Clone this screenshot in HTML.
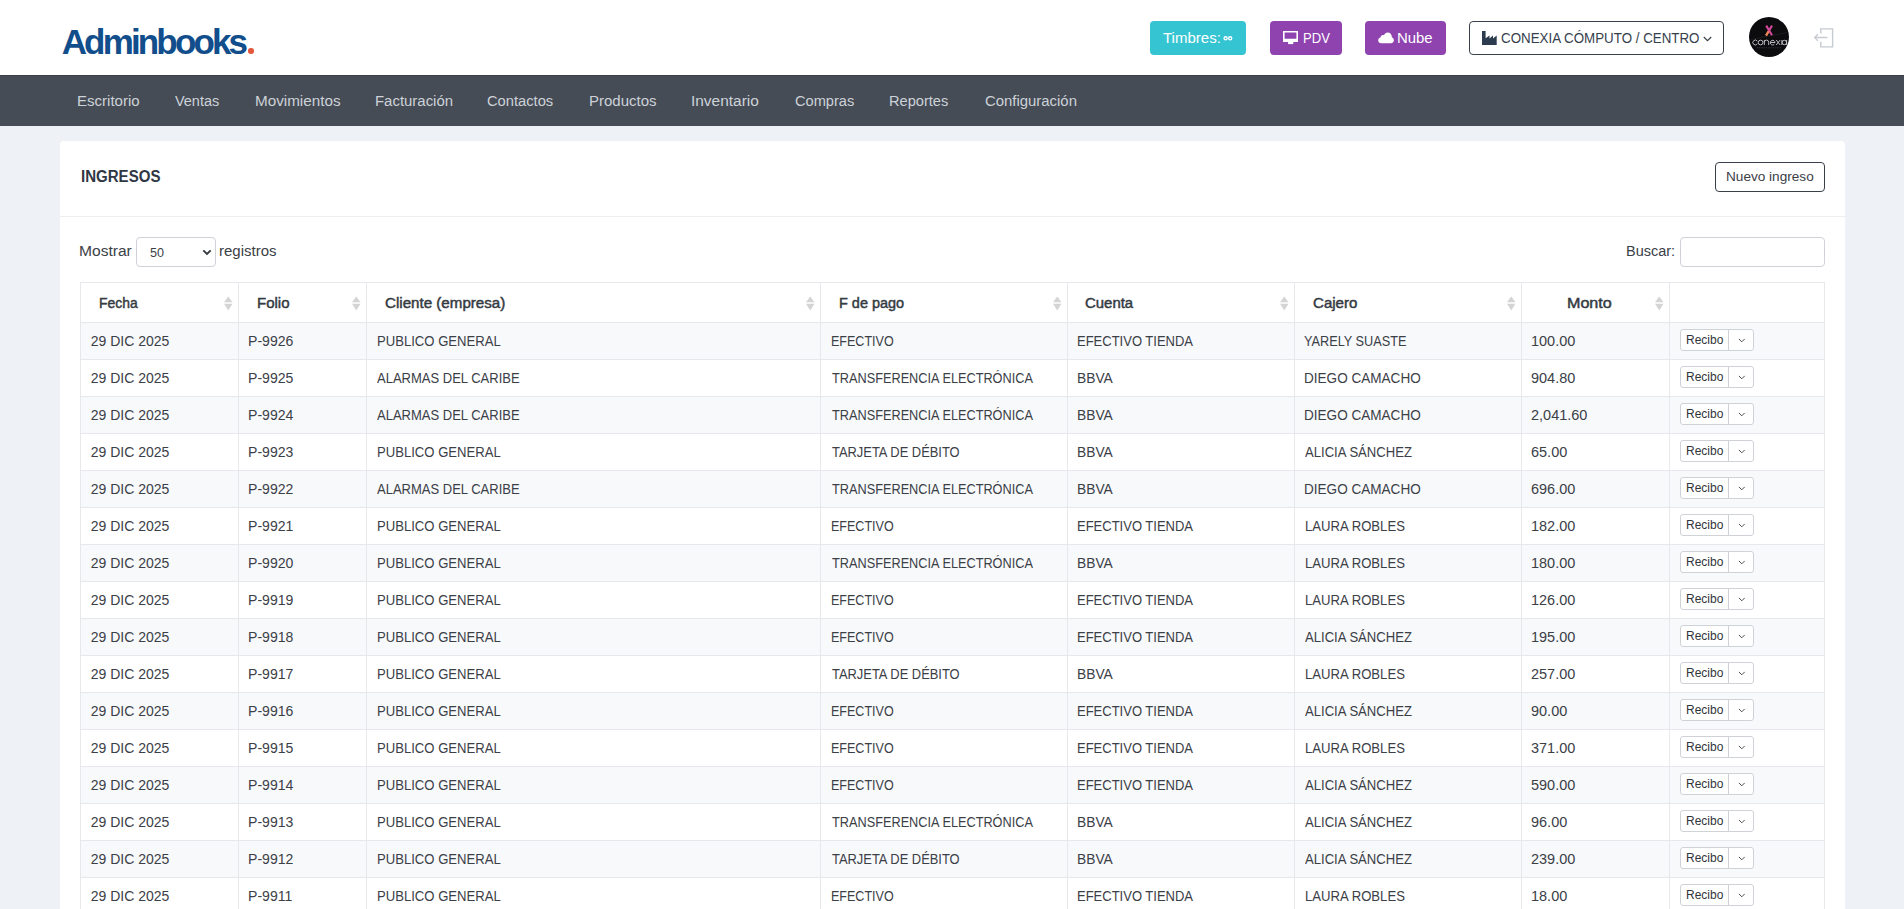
<!DOCTYPE html><html><head><meta charset="utf-8"><title>Ingresos</title><style>*{box-sizing:border-box;margin:0;padding:0}
html,body{width:1904px;height:909px;overflow:hidden}
body{background:#eef1f6;font-family:"Liberation Sans",sans-serif;color:#3b4047;position:relative}
body>*{position:absolute}
.t{white-space:nowrap;transform-origin:0 0}
#hdr{left:0;top:0;width:1904px;height:75px;background:#fff}
.logo{font-size:35px;line-height:39px;font-weight:bold;color:#124e8b}
#logodot{left:248px;top:48px;width:5.5px;height:5.5px;border-radius:50%;background:#e3583c}
.hb{top:21px;height:34px;border-radius:4px}
#b-timbres{left:1150px;width:96px;background:#35c4d2}
#b-pdv{left:1270px;width:72px;background:#8e43ae}
#b-nube{left:1365px;width:81px;background:#8e43ae}
.hbt{font-size:14px;line-height:18px;color:#fff}
#inf{left:1223.4px;top:35.9px}
#ic-pdv{left:1283px;top:30.9px}
#ic-nube{left:1378px;top:32px}
#b-emp{left:1469px;top:21px;width:255px;height:34px;border:1px solid #3a4049;border-radius:4px;background:#fff}
#ic-emp{left:1482px;top:31px}
.empt{font-size:14px;line-height:18px;color:#36404d}
#ic-chev{left:1702.5px;top:35.5px}
#avatar{left:1749px;top:17px}
#logout{left:1813px;top:27px}
#nav{left:0;top:75px;width:1904px;height:51px;background:#454c56;border-top:1px solid #3c414a}
.navt{font-size:14px;line-height:18px;color:#cdd2d8}
#card{left:60px;top:141px;width:1785px;height:900px;background:#fff;border-radius:4px}
#chline{left:60px;top:216px;width:1785px;height:1px;background:#eceef2}
.title{font-size:16px;line-height:20px;font-weight:bold;color:#2f3744}
#nuevo{left:1715px;top:162px;width:110px;height:30px;border:1px solid #3a4049;border-radius:4px}
.nuevot{font-size:13px;line-height:17px;color:#3b4047}
.ctlt{font-size:14px;line-height:18px;color:#3b4047}
#sel{left:136px;top:237px;width:80px;height:30px;border:1px solid #cfd3d8;border-radius:4px}
.selt{font-size:12px;line-height:16px;color:#3b4047}
#ic-sel{left:202px;top:249px}
#inp{left:1680px;top:237px;width:145px;height:30px;border:1px solid #cfd3d8;border-radius:4px}
#thead{left:80px;top:282px;width:1745px;height:41px;background:#fff;border-top:1px solid #e6e8eb;border-bottom:1px solid #e6e8eb}
.tr{left:80px;width:1745px;height:37px;background:#fff;border-bottom:1px solid #e6e8eb}
.tr.odd{background:#f8f9fb}
.vl{top:282px;width:1px;height:700px;background:#e6e8eb}
.tht{font-size:14px;line-height:18px;font-weight:normal;color:#343a42;-webkit-text-stroke:0.45px #343a42}
.srt{top:295.5px}
.tdt{font-size:14px;line-height:18px;color:#3b4047}
.bgp{left:1680px;width:74px;height:22px;border:1px solid #cfd3d8;border-radius:3px;background:#fff}
.bgp::after{content:"";position:absolute;left:47px;top:0;width:1px;height:20px;background:#cfd3d8}
.rbt{font-size:12px;line-height:16px;color:#30353b}
.ddc{left:1737.5px}
</style></head><body>
<div id="hdr"></div>
<span class="t logo" style="left:61.67px;top:22.00px;letter-spacing:-2.836px">Adminbooks</span>
<div id="logodot"></div>
<div class="hb" id="b-timbres"></div>
<span class="t hbt" style="left:1163.20px;top:29.00px;transform:scaleX(1.0719)">Timbres:</span>
<svg id="inf" width="10" height="5" viewBox="0 0 10 5"><circle cx="2.6" cy="2.3" r="1.55" stroke="#fff" stroke-width="1.35" fill="none"/><circle cx="7.2" cy="2.3" r="1.55" stroke="#fff" stroke-width="1.35" fill="none"/></svg>
<div class="hb" id="b-pdv"></div>
<svg id="ic-pdv" width="15" height="14" viewBox="0 0 15 14"><path fill="#fff" fill-rule="evenodd" d="M0 0h15v11.1H0zM1.6 1.4v6.4h11.8V1.4z"/><path fill="#fff" d="M5.1 11h5.2v2.1H5.1z"/></svg>
<span class="t hbt" style="left:1302.52px;top:29.00px;transform:scaleX(0.9332)">PDV</span>
<div class="hb" id="b-nube"></div>
<svg id="ic-nube" width="16" height="12" viewBox="0 0 16 12"><path fill="#fff" d="M3.3 11.2C1.5 11.2 0.2 10 0.2 8.4 0.2 6.9 1.2 5.8 2.6 5.6 2.6 5.5 2.6 5.4 2.6 5.3 2.6 4 3.6 3 4.9 3 5.3 3 5.7 3.1 6 3.3 6.7 1.6 8.2 0.6 9.8 0.6 12 0.6 13.8 2.4 13.8 4.6 13.8 4.8 13.8 5 13.8 5.2 15.1 5.7 15.9 6.9 15.9 8.3 15.9 9.9 14.6 11.2 13 11.2z"/></svg>
<span class="t hbt" style="left:1396.81px;top:29.00px;transform:scaleX(1.0656)">Nube</span>
<div id="b-emp"></div>
<svg id="ic-emp" width="15" height="14" viewBox="0 0 15 14"><path fill="#2d3b4e" d="M0 0h3.6v7.2L7.5 4.4v3L11 4.4v3l3.7-2.9V14H0z"/></svg>
<span class="t empt" style="left:1500.57px;top:28.70px;transform:scaleX(0.9533)">CONEXIA CÓMPUTO / CENTRO</span>
<svg id="ic-chev" width="9" height="6" viewBox="0 0 9 6"><path d="M0.8 1L4.5 4.6 8.2 1" stroke="#3a4049" stroke-width="1.2" fill="none"/></svg>
<svg id="avatar" width="40" height="40" viewBox="0 0 40 40"><circle cx="20" cy="20" r="20" fill="#0c0c0f"/>
<path d="M2 22.5L38 15.5" stroke="#2a2a2e" stroke-width="0.5"/>
<path d="M17.2 8.6L23 18.2M23 8.6L17.2 18.2" stroke="#d5489a" stroke-width="2.1"/>
<path d="M17 18.6L19.7 14.3" stroke="#e98a4a" stroke-width="2.1"/>
<g stroke="#c4c4c9" stroke-width="0.95" fill="none"><path d="M8.3 24.2A2.4 2.4 0 1 0 8.3 26.8"/><circle cx="11.6" cy="25.5" r="2.35"/><path d="M15.3 23v5M15.3 25.3a2.2 2.2 0 0 1 4.4 0V28"/><path d="M21.3 25.5h4.7A2.35 2.35 0 1 0 25.4 27.2"/><path d="M27.2 23l4 5M31.2 23l-4 5"/><path d="M32.9 23v5"/><circle cx="35.4" cy="25.5" r="2.2"/><path d="M37.6 23v5"/></g>
<path d="M7.5 30.8h25" stroke="#4a4a50" stroke-width="0.6" stroke-dasharray="1.5 0.8"/></svg>
<svg id="logout" width="22" height="22" viewBox="0 0 22 22"><path d="M7.8 6.6V1.9h11.8v18.0H7.8v-5.1" stroke="#c6cbd2" stroke-width="1.4" fill="none"/><path d="M14.3 10.5H1.6M5 7.2L1.6 10.5 5 13.9" stroke="#c6cbd2" stroke-width="1.3" fill="none"/></svg>
<div id="nav"></div>
<span class="t navt" style="left:77.06px;top:92.00px;transform:scaleX(1.0735)">Escritorio</span>
<span class="t navt" style="left:175.15px;top:92.00px;transform:scaleX(1.0320)">Ventas</span>
<span class="t navt" style="left:255.38px;top:92.00px;transform:scaleX(1.0884)">Movimientos</span>
<span class="t navt" style="left:375.31px;top:92.00px;transform:scaleX(1.0669)">Facturación</span>
<span class="t navt" style="left:487.48px;top:92.00px;transform:scaleX(1.0494)">Contactos</span>
<span class="t navt" style="left:588.86px;top:92.00px;transform:scaleX(1.0718)">Productos</span>
<span class="t navt" style="left:691.45px;top:92.00px;transform:scaleX(1.1026)">Inventario</span>
<span class="t navt" style="left:794.73px;top:92.00px;transform:scaleX(1.0444)">Compras</span>
<span class="t navt" style="left:889.00px;top:92.00px;transform:scaleX(1.0428)">Reportes</span>
<span class="t navt" style="left:984.54px;top:92.00px;transform:scaleX(1.0644)">Configuración</span>
<div id="card"></div><div id="chline"></div>
<span class="t title" style="left:80.71px;top:167.00px;transform:scaleX(0.9406)">INGRESOS</span>
<div id="nuevo"></div>
<span class="t nuevot" style="left:1726.30px;top:168.00px;transform:scaleX(1.0463)">Nuevo ingreso</span>
<span class="t ctlt" style="left:79.34px;top:242.20px;transform:scaleX(1.1122)">Mostrar</span>
<div id="sel"></div>
<span class="t selt" style="left:150.17px;top:244.50px;transform:scaleX(1.0494)">50</span>
<svg id="ic-sel" width="10" height="7" viewBox="0 0 10 7"><path d="M1.3 1.4L5 5 8.7 1.4" stroke="#343a40" stroke-width="1.9" fill="none"/></svg>
<span class="t ctlt" style="left:219.44px;top:242.20px;transform:scaleX(1.0702)">registros</span>
<span class="t ctlt" style="left:1625.55px;top:242.00px;transform:scaleX(1.0349)">Buscar:</span>
<div id="inp"></div>
<div id="thead"></div>
<div class="tr odd" style="top:323px"></div>
<div class="tr" style="top:360px"></div>
<div class="tr odd" style="top:397px"></div>
<div class="tr" style="top:434px"></div>
<div class="tr odd" style="top:471px"></div>
<div class="tr" style="top:508px"></div>
<div class="tr odd" style="top:545px"></div>
<div class="tr" style="top:582px"></div>
<div class="tr odd" style="top:619px"></div>
<div class="tr" style="top:656px"></div>
<div class="tr odd" style="top:693px"></div>
<div class="tr" style="top:730px"></div>
<div class="tr odd" style="top:767px"></div>
<div class="tr" style="top:804px"></div>
<div class="tr odd" style="top:841px"></div>
<div class="tr" style="top:878px"></div>
<div class="vl" style="left:80px"></div>
<div class="vl" style="left:238px"></div>
<div class="vl" style="left:366px"></div>
<div class="vl" style="left:820px"></div>
<div class="vl" style="left:1067px"></div>
<div class="vl" style="left:1294px"></div>
<div class="vl" style="left:1521px"></div>
<div class="vl" style="left:1669px"></div>
<div class="vl" style="left:1824px"></div>
<span class="t tht" style="left:98.81px;top:293.70px;transform:scaleX(0.9926)">Fecha</span>
<svg class="srt" style="left:224.0px" width="9" height="15" viewBox="0 0 9 15"><path d="M4.25 0.6L8.5 6.3H0z" fill="#d4d4d4"/><path d="M4.25 14.4L8.5 7.7H0z" fill="#d4d4d4"/></svg>
<span class="t tht" style="left:256.82px;top:293.70px;transform:scaleX(1.0716)">Folio</span>
<svg class="srt" style="left:352.0px" width="9" height="15" viewBox="0 0 9 15"><path d="M4.25 0.6L8.5 6.3H0z" fill="#d4d4d4"/><path d="M4.25 14.4L8.5 7.7H0z" fill="#d4d4d4"/></svg>
<span class="t tht" style="left:384.57px;top:293.70px;transform:scaleX(1.0811)">Cliente (empresa)</span>
<svg class="srt" style="left:806.0px" width="9" height="15" viewBox="0 0 9 15"><path d="M4.25 0.6L8.5 6.3H0z" fill="#d4d4d4"/><path d="M4.25 14.4L8.5 7.7H0z" fill="#d4d4d4"/></svg>
<span class="t tht" style="left:838.68px;top:293.70px;transform:scaleX(1.0330)">F de pago</span>
<svg class="srt" style="left:1053.0px" width="9" height="15" viewBox="0 0 9 15"><path d="M4.25 0.6L8.5 6.3H0z" fill="#d4d4d4"/><path d="M4.25 14.4L8.5 7.7H0z" fill="#d4d4d4"/></svg>
<span class="t tht" style="left:1085.24px;top:293.70px;transform:scaleX(1.0664)">Cuenta</span>
<svg class="srt" style="left:1280.0px" width="9" height="15" viewBox="0 0 9 15"><path d="M4.25 0.6L8.5 6.3H0z" fill="#d4d4d4"/><path d="M4.25 14.4L8.5 7.7H0z" fill="#d4d4d4"/></svg>
<span class="t tht" style="left:1312.63px;top:293.70px;transform:scaleX(1.0763)">Cajero</span>
<svg class="srt" style="left:1507.0px" width="9" height="15" viewBox="0 0 9 15"><path d="M4.25 0.6L8.5 6.3H0z" fill="#d4d4d4"/><path d="M4.25 14.4L8.5 7.7H0z" fill="#d4d4d4"/></svg>
<span class="t tht" style="left:1566.64px;top:293.70px;transform:scaleX(1.1503)">Monto</span>
<svg class="srt" style="left:1655.0px" width="9" height="15" viewBox="0 0 9 15"><path d="M4.25 0.6L8.5 6.3H0z" fill="#d4d4d4"/><path d="M4.25 14.4L8.5 7.7H0z" fill="#d4d4d4"/></svg>
<span class="t tdt" style="left:90.72px;top:332.00px">29 DIC 2025</span>
<span class="t tdt" style="left:248.49px;top:332.00px;transform:scaleX(1.0043)">P-9926</span>
<span class="t tdt" style="left:377.02px;top:332.00px;transform:scaleX(0.9354)">PUBLICO GENERAL</span>
<span class="t tdt" style="left:830.57px;top:332.00px;transform:scaleX(0.8947)">EFECTIVO</span>
<span class="t tdt" style="left:1077.27px;top:332.00px;transform:scaleX(0.9283)">EFECTIVO TIENDA</span>
<span class="t tdt" style="left:1304.29px;top:332.00px;transform:scaleX(0.9075)">YARELY SUASTE</span>
<span class="t tdt" style="left:1531.33px;top:332.00px;transform:scaleX(1.0343)">100.00</span>
<div class="bgp" style="top:329px"></div>
<span class="t rbt" style="left:1685.66px;top:331.80px;transform:scaleX(0.9986)">Recibo</span>
<svg class="ddc" style="top:338px" width="8" height="5" viewBox="0 0 8 5"><path d="M0.9 0.9L3.8 3.8 6.7 0.9" stroke="#4a4f55" stroke-width="1" fill="none"/></svg>
<span class="t tdt" style="left:90.72px;top:369.00px">29 DIC 2025</span>
<span class="t tdt" style="left:248.49px;top:369.00px;transform:scaleX(1.0043)">P-9925</span>
<span class="t tdt" style="left:377.20px;top:369.00px;transform:scaleX(0.9288)">ALARMAS DEL CARIBE</span>
<span class="t tdt" style="left:831.64px;top:369.00px;transform:scaleX(0.9096)">TRANSFERENCIA ELECTRÓNICA</span>
<span class="t tdt" style="left:1077.37px;top:369.00px;transform:scaleX(0.9847)">BBVA</span>
<span class="t tdt" style="left:1304.11px;top:369.00px;transform:scaleX(0.9680)">DIEGO CAMACHO</span>
<span class="t tdt" style="left:1531.33px;top:369.00px;transform:scaleX(1.0343)">904.80</span>
<div class="bgp" style="top:366px"></div>
<span class="t rbt" style="left:1685.66px;top:368.80px;transform:scaleX(0.9986)">Recibo</span>
<svg class="ddc" style="top:375px" width="8" height="5" viewBox="0 0 8 5"><path d="M0.9 0.9L3.8 3.8 6.7 0.9" stroke="#4a4f55" stroke-width="1" fill="none"/></svg>
<span class="t tdt" style="left:90.72px;top:406.00px">29 DIC 2025</span>
<span class="t tdt" style="left:248.49px;top:406.00px;transform:scaleX(1.0043)">P-9924</span>
<span class="t tdt" style="left:377.20px;top:406.00px;transform:scaleX(0.9288)">ALARMAS DEL CARIBE</span>
<span class="t tdt" style="left:831.64px;top:406.00px;transform:scaleX(0.9096)">TRANSFERENCIA ELECTRÓNICA</span>
<span class="t tdt" style="left:1077.37px;top:406.00px;transform:scaleX(0.9847)">BBVA</span>
<span class="t tdt" style="left:1304.11px;top:406.00px;transform:scaleX(0.9680)">DIEGO CAMACHO</span>
<span class="t tdt" style="left:1531.33px;top:406.00px;transform:scaleX(1.0343)">2,041.60</span>
<div class="bgp" style="top:403px"></div>
<span class="t rbt" style="left:1685.66px;top:405.80px;transform:scaleX(0.9986)">Recibo</span>
<svg class="ddc" style="top:412px" width="8" height="5" viewBox="0 0 8 5"><path d="M0.9 0.9L3.8 3.8 6.7 0.9" stroke="#4a4f55" stroke-width="1" fill="none"/></svg>
<span class="t tdt" style="left:90.72px;top:443.00px">29 DIC 2025</span>
<span class="t tdt" style="left:248.49px;top:443.00px;transform:scaleX(1.0043)">P-9923</span>
<span class="t tdt" style="left:377.02px;top:443.00px;transform:scaleX(0.9354)">PUBLICO GENERAL</span>
<span class="t tdt" style="left:831.51px;top:443.00px;transform:scaleX(0.9218)">TARJETA DE DÉBITO</span>
<span class="t tdt" style="left:1077.37px;top:443.00px;transform:scaleX(0.9847)">BBVA</span>
<span class="t tdt" style="left:1304.57px;top:443.00px;transform:scaleX(0.9350)">ALICIA SÁNCHEZ</span>
<span class="t tdt" style="left:1531.33px;top:443.00px;transform:scaleX(1.0343)">65.00</span>
<div class="bgp" style="top:440px"></div>
<span class="t rbt" style="left:1685.66px;top:442.80px;transform:scaleX(0.9986)">Recibo</span>
<svg class="ddc" style="top:449px" width="8" height="5" viewBox="0 0 8 5"><path d="M0.9 0.9L3.8 3.8 6.7 0.9" stroke="#4a4f55" stroke-width="1" fill="none"/></svg>
<span class="t tdt" style="left:90.72px;top:480.00px">29 DIC 2025</span>
<span class="t tdt" style="left:248.49px;top:480.00px;transform:scaleX(1.0043)">P-9922</span>
<span class="t tdt" style="left:377.20px;top:480.00px;transform:scaleX(0.9288)">ALARMAS DEL CARIBE</span>
<span class="t tdt" style="left:831.64px;top:480.00px;transform:scaleX(0.9096)">TRANSFERENCIA ELECTRÓNICA</span>
<span class="t tdt" style="left:1077.37px;top:480.00px;transform:scaleX(0.9847)">BBVA</span>
<span class="t tdt" style="left:1304.11px;top:480.00px;transform:scaleX(0.9680)">DIEGO CAMACHO</span>
<span class="t tdt" style="left:1531.33px;top:480.00px;transform:scaleX(1.0343)">696.00</span>
<div class="bgp" style="top:477px"></div>
<span class="t rbt" style="left:1685.66px;top:479.80px;transform:scaleX(0.9986)">Recibo</span>
<svg class="ddc" style="top:486px" width="8" height="5" viewBox="0 0 8 5"><path d="M0.9 0.9L3.8 3.8 6.7 0.9" stroke="#4a4f55" stroke-width="1" fill="none"/></svg>
<span class="t tdt" style="left:90.72px;top:517.00px">29 DIC 2025</span>
<span class="t tdt" style="left:248.49px;top:517.00px;transform:scaleX(1.0043)">P-9921</span>
<span class="t tdt" style="left:377.02px;top:517.00px;transform:scaleX(0.9354)">PUBLICO GENERAL</span>
<span class="t tdt" style="left:830.57px;top:517.00px;transform:scaleX(0.8947)">EFECTIVO</span>
<span class="t tdt" style="left:1077.27px;top:517.00px;transform:scaleX(0.9283)">EFECTIVO TIENDA</span>
<span class="t tdt" style="left:1304.59px;top:517.00px;transform:scaleX(0.9370)">LAURA ROBLES</span>
<span class="t tdt" style="left:1531.33px;top:517.00px;transform:scaleX(1.0343)">182.00</span>
<div class="bgp" style="top:514px"></div>
<span class="t rbt" style="left:1685.66px;top:516.80px;transform:scaleX(0.9986)">Recibo</span>
<svg class="ddc" style="top:523px" width="8" height="5" viewBox="0 0 8 5"><path d="M0.9 0.9L3.8 3.8 6.7 0.9" stroke="#4a4f55" stroke-width="1" fill="none"/></svg>
<span class="t tdt" style="left:90.72px;top:554.00px">29 DIC 2025</span>
<span class="t tdt" style="left:248.49px;top:554.00px;transform:scaleX(1.0043)">P-9920</span>
<span class="t tdt" style="left:377.02px;top:554.00px;transform:scaleX(0.9354)">PUBLICO GENERAL</span>
<span class="t tdt" style="left:831.64px;top:554.00px;transform:scaleX(0.9096)">TRANSFERENCIA ELECTRÓNICA</span>
<span class="t tdt" style="left:1077.37px;top:554.00px;transform:scaleX(0.9847)">BBVA</span>
<span class="t tdt" style="left:1304.59px;top:554.00px;transform:scaleX(0.9370)">LAURA ROBLES</span>
<span class="t tdt" style="left:1531.33px;top:554.00px;transform:scaleX(1.0343)">180.00</span>
<div class="bgp" style="top:551px"></div>
<span class="t rbt" style="left:1685.66px;top:553.80px;transform:scaleX(0.9986)">Recibo</span>
<svg class="ddc" style="top:560px" width="8" height="5" viewBox="0 0 8 5"><path d="M0.9 0.9L3.8 3.8 6.7 0.9" stroke="#4a4f55" stroke-width="1" fill="none"/></svg>
<span class="t tdt" style="left:90.72px;top:591.00px">29 DIC 2025</span>
<span class="t tdt" style="left:248.49px;top:591.00px;transform:scaleX(1.0043)">P-9919</span>
<span class="t tdt" style="left:377.02px;top:591.00px;transform:scaleX(0.9354)">PUBLICO GENERAL</span>
<span class="t tdt" style="left:830.57px;top:591.00px;transform:scaleX(0.8947)">EFECTIVO</span>
<span class="t tdt" style="left:1077.27px;top:591.00px;transform:scaleX(0.9283)">EFECTIVO TIENDA</span>
<span class="t tdt" style="left:1304.59px;top:591.00px;transform:scaleX(0.9370)">LAURA ROBLES</span>
<span class="t tdt" style="left:1531.33px;top:591.00px;transform:scaleX(1.0343)">126.00</span>
<div class="bgp" style="top:588px"></div>
<span class="t rbt" style="left:1685.66px;top:590.80px;transform:scaleX(0.9986)">Recibo</span>
<svg class="ddc" style="top:597px" width="8" height="5" viewBox="0 0 8 5"><path d="M0.9 0.9L3.8 3.8 6.7 0.9" stroke="#4a4f55" stroke-width="1" fill="none"/></svg>
<span class="t tdt" style="left:90.72px;top:628.00px">29 DIC 2025</span>
<span class="t tdt" style="left:248.49px;top:628.00px;transform:scaleX(1.0043)">P-9918</span>
<span class="t tdt" style="left:377.02px;top:628.00px;transform:scaleX(0.9354)">PUBLICO GENERAL</span>
<span class="t tdt" style="left:830.57px;top:628.00px;transform:scaleX(0.8947)">EFECTIVO</span>
<span class="t tdt" style="left:1077.27px;top:628.00px;transform:scaleX(0.9283)">EFECTIVO TIENDA</span>
<span class="t tdt" style="left:1304.57px;top:628.00px;transform:scaleX(0.9350)">ALICIA SÁNCHEZ</span>
<span class="t tdt" style="left:1531.33px;top:628.00px;transform:scaleX(1.0343)">195.00</span>
<div class="bgp" style="top:625px"></div>
<span class="t rbt" style="left:1685.66px;top:627.80px;transform:scaleX(0.9986)">Recibo</span>
<svg class="ddc" style="top:634px" width="8" height="5" viewBox="0 0 8 5"><path d="M0.9 0.9L3.8 3.8 6.7 0.9" stroke="#4a4f55" stroke-width="1" fill="none"/></svg>
<span class="t tdt" style="left:90.72px;top:665.00px">29 DIC 2025</span>
<span class="t tdt" style="left:248.49px;top:665.00px;transform:scaleX(1.0043)">P-9917</span>
<span class="t tdt" style="left:377.02px;top:665.00px;transform:scaleX(0.9354)">PUBLICO GENERAL</span>
<span class="t tdt" style="left:831.51px;top:665.00px;transform:scaleX(0.9218)">TARJETA DE DÉBITO</span>
<span class="t tdt" style="left:1077.37px;top:665.00px;transform:scaleX(0.9847)">BBVA</span>
<span class="t tdt" style="left:1304.59px;top:665.00px;transform:scaleX(0.9370)">LAURA ROBLES</span>
<span class="t tdt" style="left:1531.33px;top:665.00px;transform:scaleX(1.0343)">257.00</span>
<div class="bgp" style="top:662px"></div>
<span class="t rbt" style="left:1685.66px;top:664.80px;transform:scaleX(0.9986)">Recibo</span>
<svg class="ddc" style="top:671px" width="8" height="5" viewBox="0 0 8 5"><path d="M0.9 0.9L3.8 3.8 6.7 0.9" stroke="#4a4f55" stroke-width="1" fill="none"/></svg>
<span class="t tdt" style="left:90.72px;top:702.00px">29 DIC 2025</span>
<span class="t tdt" style="left:248.49px;top:702.00px;transform:scaleX(1.0043)">P-9916</span>
<span class="t tdt" style="left:377.02px;top:702.00px;transform:scaleX(0.9354)">PUBLICO GENERAL</span>
<span class="t tdt" style="left:830.57px;top:702.00px;transform:scaleX(0.8947)">EFECTIVO</span>
<span class="t tdt" style="left:1077.27px;top:702.00px;transform:scaleX(0.9283)">EFECTIVO TIENDA</span>
<span class="t tdt" style="left:1304.57px;top:702.00px;transform:scaleX(0.9350)">ALICIA SÁNCHEZ</span>
<span class="t tdt" style="left:1531.33px;top:702.00px;transform:scaleX(1.0343)">90.00</span>
<div class="bgp" style="top:699px"></div>
<span class="t rbt" style="left:1685.66px;top:701.80px;transform:scaleX(0.9986)">Recibo</span>
<svg class="ddc" style="top:708px" width="8" height="5" viewBox="0 0 8 5"><path d="M0.9 0.9L3.8 3.8 6.7 0.9" stroke="#4a4f55" stroke-width="1" fill="none"/></svg>
<span class="t tdt" style="left:90.72px;top:739.00px">29 DIC 2025</span>
<span class="t tdt" style="left:248.49px;top:739.00px;transform:scaleX(1.0043)">P-9915</span>
<span class="t tdt" style="left:377.02px;top:739.00px;transform:scaleX(0.9354)">PUBLICO GENERAL</span>
<span class="t tdt" style="left:830.57px;top:739.00px;transform:scaleX(0.8947)">EFECTIVO</span>
<span class="t tdt" style="left:1077.27px;top:739.00px;transform:scaleX(0.9283)">EFECTIVO TIENDA</span>
<span class="t tdt" style="left:1304.59px;top:739.00px;transform:scaleX(0.9370)">LAURA ROBLES</span>
<span class="t tdt" style="left:1531.33px;top:739.00px;transform:scaleX(1.0343)">371.00</span>
<div class="bgp" style="top:736px"></div>
<span class="t rbt" style="left:1685.66px;top:738.80px;transform:scaleX(0.9986)">Recibo</span>
<svg class="ddc" style="top:745px" width="8" height="5" viewBox="0 0 8 5"><path d="M0.9 0.9L3.8 3.8 6.7 0.9" stroke="#4a4f55" stroke-width="1" fill="none"/></svg>
<span class="t tdt" style="left:90.72px;top:776.00px">29 DIC 2025</span>
<span class="t tdt" style="left:248.49px;top:776.00px;transform:scaleX(1.0043)">P-9914</span>
<span class="t tdt" style="left:377.02px;top:776.00px;transform:scaleX(0.9354)">PUBLICO GENERAL</span>
<span class="t tdt" style="left:830.57px;top:776.00px;transform:scaleX(0.8947)">EFECTIVO</span>
<span class="t tdt" style="left:1077.27px;top:776.00px;transform:scaleX(0.9283)">EFECTIVO TIENDA</span>
<span class="t tdt" style="left:1304.57px;top:776.00px;transform:scaleX(0.9350)">ALICIA SÁNCHEZ</span>
<span class="t tdt" style="left:1531.33px;top:776.00px;transform:scaleX(1.0343)">590.00</span>
<div class="bgp" style="top:773px"></div>
<span class="t rbt" style="left:1685.66px;top:775.80px;transform:scaleX(0.9986)">Recibo</span>
<svg class="ddc" style="top:782px" width="8" height="5" viewBox="0 0 8 5"><path d="M0.9 0.9L3.8 3.8 6.7 0.9" stroke="#4a4f55" stroke-width="1" fill="none"/></svg>
<span class="t tdt" style="left:90.72px;top:813.00px">29 DIC 2025</span>
<span class="t tdt" style="left:248.49px;top:813.00px;transform:scaleX(1.0043)">P-9913</span>
<span class="t tdt" style="left:377.02px;top:813.00px;transform:scaleX(0.9354)">PUBLICO GENERAL</span>
<span class="t tdt" style="left:831.64px;top:813.00px;transform:scaleX(0.9096)">TRANSFERENCIA ELECTRÓNICA</span>
<span class="t tdt" style="left:1077.37px;top:813.00px;transform:scaleX(0.9847)">BBVA</span>
<span class="t tdt" style="left:1304.57px;top:813.00px;transform:scaleX(0.9350)">ALICIA SÁNCHEZ</span>
<span class="t tdt" style="left:1531.33px;top:813.00px;transform:scaleX(1.0343)">96.00</span>
<div class="bgp" style="top:810px"></div>
<span class="t rbt" style="left:1685.66px;top:812.80px;transform:scaleX(0.9986)">Recibo</span>
<svg class="ddc" style="top:819px" width="8" height="5" viewBox="0 0 8 5"><path d="M0.9 0.9L3.8 3.8 6.7 0.9" stroke="#4a4f55" stroke-width="1" fill="none"/></svg>
<span class="t tdt" style="left:90.72px;top:850.00px">29 DIC 2025</span>
<span class="t tdt" style="left:248.49px;top:850.00px;transform:scaleX(1.0043)">P-9912</span>
<span class="t tdt" style="left:377.02px;top:850.00px;transform:scaleX(0.9354)">PUBLICO GENERAL</span>
<span class="t tdt" style="left:831.51px;top:850.00px;transform:scaleX(0.9218)">TARJETA DE DÉBITO</span>
<span class="t tdt" style="left:1077.37px;top:850.00px;transform:scaleX(0.9847)">BBVA</span>
<span class="t tdt" style="left:1304.57px;top:850.00px;transform:scaleX(0.9350)">ALICIA SÁNCHEZ</span>
<span class="t tdt" style="left:1531.33px;top:850.00px;transform:scaleX(1.0343)">239.00</span>
<div class="bgp" style="top:847px"></div>
<span class="t rbt" style="left:1685.66px;top:849.80px;transform:scaleX(0.9986)">Recibo</span>
<svg class="ddc" style="top:856px" width="8" height="5" viewBox="0 0 8 5"><path d="M0.9 0.9L3.8 3.8 6.7 0.9" stroke="#4a4f55" stroke-width="1" fill="none"/></svg>
<span class="t tdt" style="left:90.72px;top:887.00px">29 DIC 2025</span>
<span class="t tdt" style="left:248.49px;top:887.00px;transform:scaleX(1.0043)">P-9911</span>
<span class="t tdt" style="left:377.02px;top:887.00px;transform:scaleX(0.9354)">PUBLICO GENERAL</span>
<span class="t tdt" style="left:830.57px;top:887.00px;transform:scaleX(0.8947)">EFECTIVO</span>
<span class="t tdt" style="left:1077.27px;top:887.00px;transform:scaleX(0.9283)">EFECTIVO TIENDA</span>
<span class="t tdt" style="left:1304.59px;top:887.00px;transform:scaleX(0.9370)">LAURA ROBLES</span>
<span class="t tdt" style="left:1531.33px;top:887.00px;transform:scaleX(1.0343)">18.00</span>
<div class="bgp" style="top:884px"></div>
<span class="t rbt" style="left:1685.66px;top:886.80px;transform:scaleX(0.9986)">Recibo</span>
<svg class="ddc" style="top:893px" width="8" height="5" viewBox="0 0 8 5"><path d="M0.9 0.9L3.8 3.8 6.7 0.9" stroke="#4a4f55" stroke-width="1" fill="none"/></svg>
</body></html>
